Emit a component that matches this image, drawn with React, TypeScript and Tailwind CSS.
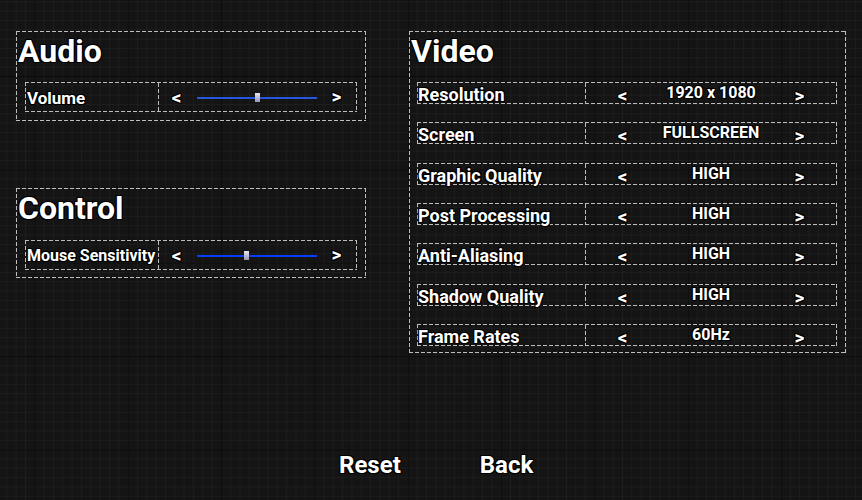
import React from 'react';

const outline =
  '[text-shadow:1px_0_0_#000,-1px_0_0_#000,0_1px_0_#000,0_-1px_0_#000,1px_1px_0_#000,-1px_-1px_0_#000,1px_-1px_0_#000,-1px_1px_0_#000]';

// 4px dash / 2px gap outline drawn with gradients, the 1px transparent border keeps the box size
const dashed =
  'border border-transparent bg-origin-border bg-no-repeat bg-[repeating-linear-gradient(to_right,#bdbdbd_0_4px,transparent_4px_6px),repeating-linear-gradient(to_right,#bdbdbd_0_4px,transparent_4px_6px),repeating-linear-gradient(to_bottom,#bdbdbd_0_4px,transparent_4px_6px),repeating-linear-gradient(to_bottom,#bdbdbd_0_4px,transparent_4px_6px)] bg-[size:100%_1px,100%_1px,1px_100%,1px_100%] bg-[position:0_0,0_100%,0_0,100%_0]';

const dashedLeft =
  'border-l border-transparent bg-origin-border bg-no-repeat bg-[repeating-linear-gradient(to_bottom,#bdbdbd_0_4px,transparent_4px_6px)] bg-[size:1px_100%] bg-[position:0_0]';

const grid =
  'bg-[#141414] bg-[linear-gradient(to_right,#0b0b0b_1px,transparent_1px),linear-gradient(to_bottom,#0b0b0b_1px,transparent_1px),linear-gradient(to_right,#1d1d1d_1px,transparent_1px),linear-gradient(to_bottom,#1d1d1d_1px,transparent_1px)] bg-[size:93.33px_93.33px,93.33px_93.33px,9.333px_9.333px,9.333px_9.333px] bg-[position:34.33px_76px,34.33px_76px,34.33px_76px,34.33px_76px]';

function Title({ children }: { children: React.ReactNode }) {
  return (
    <div
      className={`pl-px text-[32px] font-bold leading-[38px] text-white ${outline}`}
    >
      {children}
    </div>
  );
}

function Arrow({ dir }: { dir: '<' | '>' }) {
  return (
    <span
      className={`inline-block w-[11px] text-center text-[19px] font-bold leading-[20px] text-white ${outline}`}
    >
      {dir}
    </span>
  );
}

function SliderRow({
  label,
  value,
  color,
  small,
}: {
  label: string;
  value: number;
  color: string;
  small?: boolean;
}) {
  return (
    <div className={`mx-[8px] flex h-[30px] ${dashed}`}>
      <div
        className={`flex w-[132px] items-center pl-px pt-px font-bold leading-[20px] text-white ${outline} ${
          small ? 'text-[16px]' : 'text-[17px]'
        }`}
      >
        {label}
      </div>
      <div className={`flex flex-1 items-center pl-[12px] pt-[1px] ${dashedLeft}`}>
        <Arrow dir="<" />
        <div className="relative ml-[15px] flex h-[9px] w-[120px] items-center">
          <div className={`h-[2px] w-full ${color}`} />
          <div
            className="absolute top-0 h-[9px] w-[5px] bg-gradient-to-b from-[#ebe8f5] to-[#9894b3]"
            style={{ left: `${value}%` }}
          />
        </div>
        <span className="ml-[14px]">
          <Arrow dir=">" />
        </span>
      </div>
    </div>
  );
}

function OptionRow({ label, value }: { label: string; value: string }) {
  return (
    <div className={`flex h-[22px] items-start ${dashed}`}>
      <div
        className={`w-[167px] pt-[2px] text-[18px] font-bold leading-[20px] text-white ${outline}`}
      >
        {label}
      </div>
      <div className={`flex h-full flex-1 items-start px-[31px] ${dashedLeft}`}>
        <span className="mt-[2px]">
          <Arrow dir="<" />
        </span>
        <div
          className={`flex-1 text-center text-[16px] font-bold leading-[19px] text-white ${outline}`}
        >
          {value}
        </div>
        <span className="mt-[2px]">
          <Arrow dir=">" />
        </span>
      </div>
    </div>
  );
}

const videoOptions = [
  { label: 'Resolution', value: '1920 x 1080' },
  { label: 'Screen', value: 'FULLSCREEN' },
  { label: 'Graphic Quality', value: 'HIGH' },
  { label: 'Post Processing', value: 'HIGH' },
  { label: 'Anti-Aliasing', value: 'HIGH' },
  { label: 'Shadow Quality', value: 'HIGH' },
  { label: 'Frame Rates', value: '60Hz' },
];

export default function App() {
  return (
    <div
      className={`h-[500px] w-full overflow-hidden font-['Roboto',sans-serif] ${grid}`}
    >
      <div className="flex pl-[16px] pt-[31px]">
        <div className="flex w-[350px] flex-col gap-[67px]">
          <section className={`h-[90px] ${dashed}`}>
            <Title>Audio</Title>
            <div className="mt-[12px]">
              <SliderRow label="Volume" value={48} color="bg-[#2457dc]" />
            </div>
          </section>

          <section className={`h-[90px] ${dashed}`}>
            <Title>Control</Title>
            <div className="mt-[13px]">
              <SliderRow
                label="Mouse Sensitivity"
                value={39.5}
                color="bg-[#0a3cff]"
                small
              />
            </div>
          </section>
        </div>

        <section className={`ml-[43px] w-[437px] pb-[6px] ${dashed}`}>
          <Title>Video</Title>
          <div className="ml-[7px] mr-[8px] mt-[12px] flex flex-col gap-[18.33px]">
            {videoOptions.map((o) => (
              <OptionRow key={o.label} label={o.label} value={o.value} />
            ))}
          </div>
        </section>
      </div>

      <div className="mt-[98px] flex gap-[79px] pl-[339px]">
        <button
          className={`text-[24px] font-bold leading-[28px] text-white ${outline}`}
        >
          Reset
        </button>
        <button
          className={`text-[24px] font-bold leading-[28px] text-white ${outline}`}
        >
          Back
        </button>
      </div>
    </div>
  );
}
